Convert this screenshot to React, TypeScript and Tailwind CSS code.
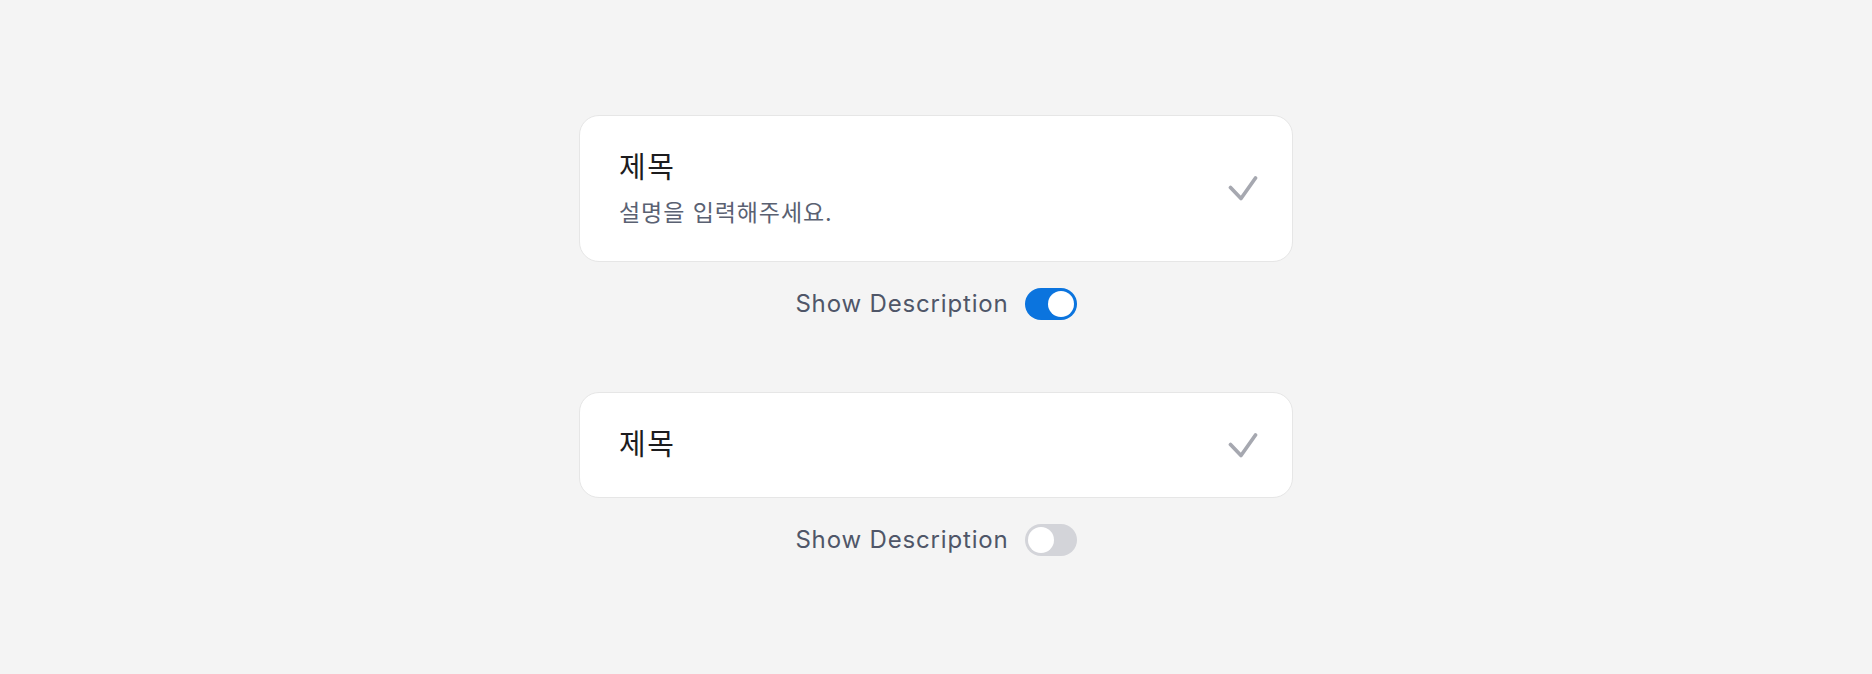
import { useState } from "react";

const font = { fontFamily: "Inter, 'Noto Sans CJK KR', sans-serif" };

function CheckMark() {
  return (
    <svg width="30" height="25" viewBox="0 0 30 25" fill="none" className="shrink-0">
      <path
        d="M2.5 11.5 13 22.5 27.5 2"
        stroke="#a6a8b0"
        strokeWidth="3.7"
        strokeLinecap="round"
        strokeLinejoin="round"
      />
    </svg>
  );
}

function Toggle({ on, onChange }: { on: boolean; onChange: () => void }) {
  return (
    <button
      type="button"
      onClick={onChange}
      className={
        "flex h-[32px] w-[52px] items-center rounded-full p-[3px] " +
        (on ? "justify-end bg-[#0b74de]" : "justify-start bg-[#d3d4d9]")
      }
    >
      <span className="block h-[26px] w-[26px] rounded-full bg-white" />
    </button>
  );
}

function ItemCard({ showDesc }: { showDesc: boolean }) {
  return (
    <div className="flex w-[714px] items-center justify-between rounded-[20px] border border-[#e6e6e6] bg-white py-[32px] pl-[39px] pr-[34px]">
      <div className="flex flex-col">
        <span className="text-[29px] leading-[40px] tracking-[0.05em] text-[#1c1c1e]">제목</span>
        {showDesc && (
          <span className="mt-[9px] text-[23px] leading-[32px] tracking-[0.04em] text-[#5a6172]">
            설명을 입력해주세요.
          </span>
        )}
      </div>
      <CheckMark />
    </div>
  );
}

function Section({ initial }: { initial: boolean }) {
  const [show, setShow] = useState(initial);
  return (
    <div className="flex flex-col items-center">
      <ItemCard showDesc={show} />
      <div className="mt-[26px] flex items-center gap-[16px]">
        <span className="text-[24px] leading-[32px] tracking-[0.035em] text-[#4f5668]">Show Description</span>
        <Toggle on={show} onChange={() => setShow(!show)} />
      </div>
    </div>
  );
}

export default function App() {
  return (
    <div className="flex min-h-screen flex-col items-center bg-[#f4f4f4] pt-[115px]" style={font}>
      <div className="flex flex-col gap-[72px]">
        <Section initial={true} />
        <Section initial={false} />
      </div>
    </div>
  );
}
